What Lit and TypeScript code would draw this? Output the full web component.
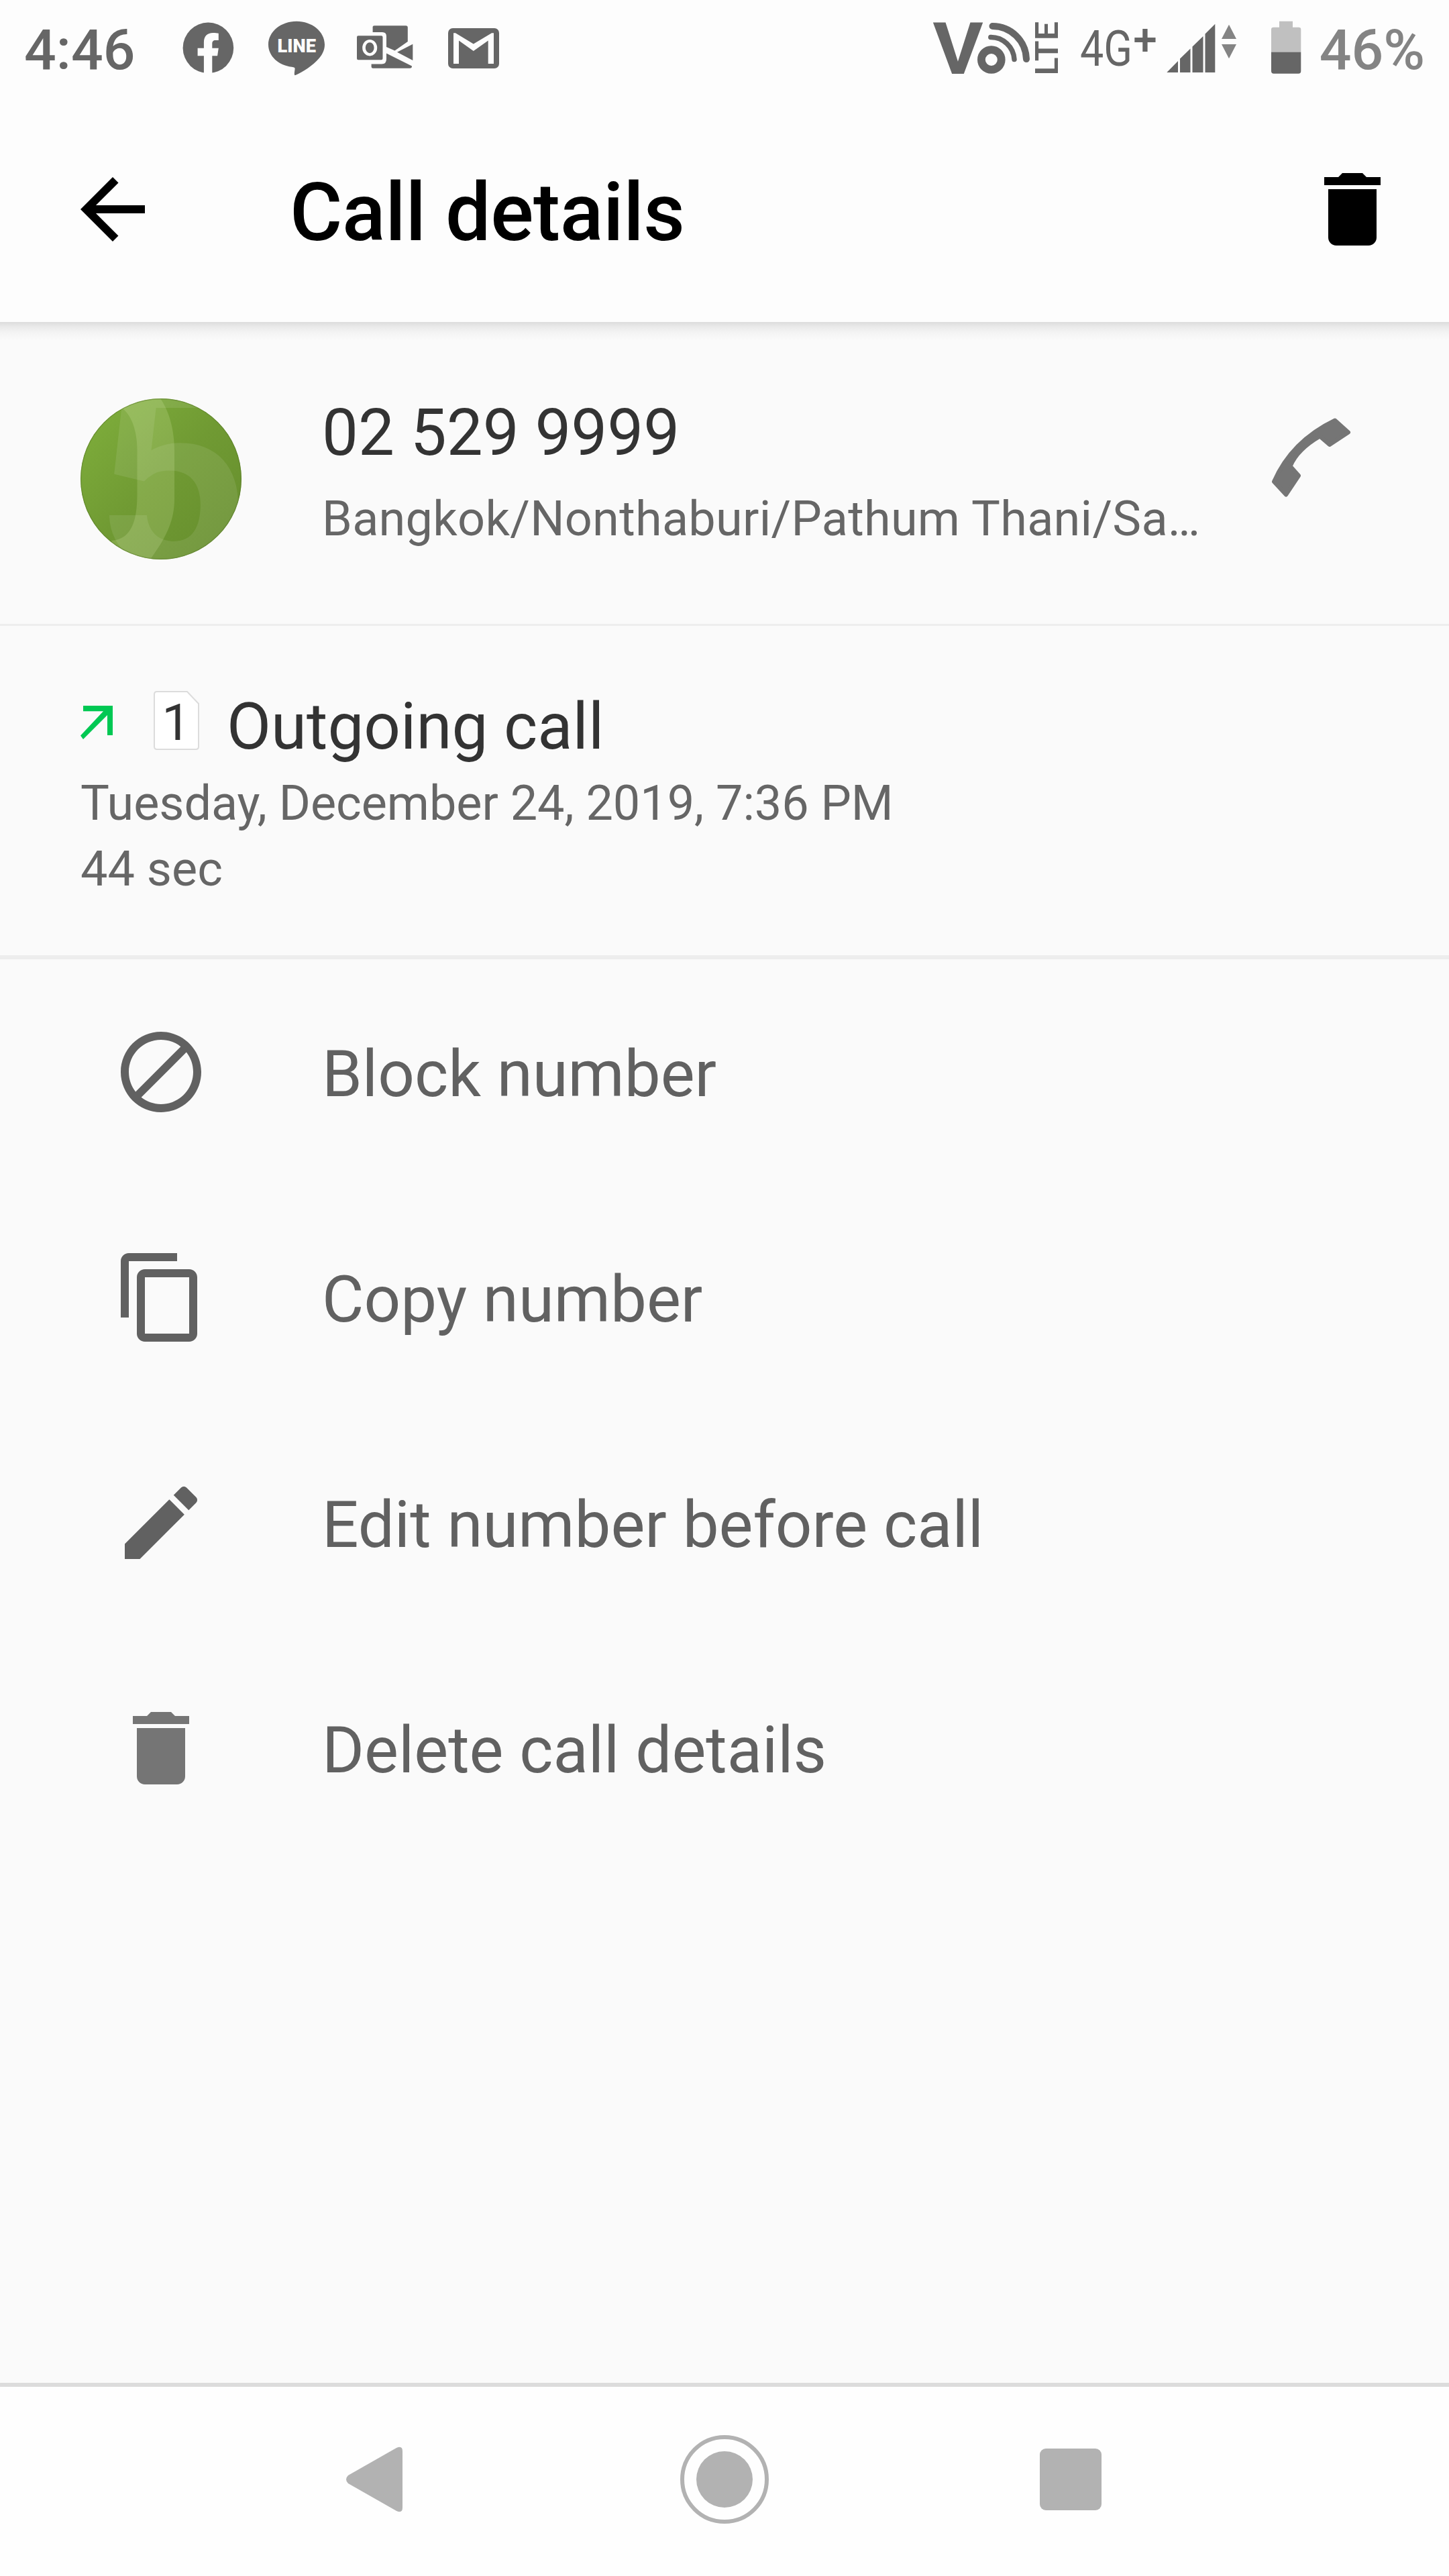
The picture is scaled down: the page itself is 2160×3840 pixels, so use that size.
import { LitElement, html, css, svg } from "lit";
import { customElement } from "lit/decorators.js";

const DELETE_PATH =
  "M6 19c0 1.1.9 2 2 2h8c1.1 0 2-.9 2-2V7H6v12zM19 4h-3.5l-1-1h-5l-1 1H5v2h14V4z";

const ACTIONS = [
  {
    label: "Block number",
    tone: "dark",
    path: "M12 2C6.48 2 2 6.48 2 12s4.48 10 10 10 10-4.48 10-10S17.52 2 12 2zM4 12c0-4.42 3.58-8 8-8 1.85 0 3.55.63 4.9 1.69L5.69 16.9C4.63 15.55 4 13.85 4 12zm8 8c-1.85 0-3.55-.63-4.9-1.69L18.31 7.1C19.37 8.45 20 10.15 20 12c0 4.42-3.58 8-8 8z",
  },
  {
    label: "Copy number",
    tone: "dark",
    path: "M16 1H4c-1.1 0-2 .9-2 2v14h2V3h12V1zm3 4H8c-1.1 0-2 .9-2 2v14c0 1.1.9 2 2 2h11c1.1 0 2-.9 2-2V7c0-1.1-.9-2-2-2zm0 16H8V7h11v14z",
  },
  {
    label: "Edit number before call",
    tone: "dark",
    path: "M3 17.25V21h3.75L17.81 9.94l-3.75-3.75L3 17.25zM20.71 7.04c.39-.39.39-1.02 0-1.41l-2.34-2.34c-.39-.39-1.02-.39-1.41 0l-1.83 1.83 3.75 3.75 1.83-1.83z",
  },
  { label: "Delete call details", tone: "mid", path: DELETE_PATH },
];

@customElement("status-bar")
export class StatusBar extends LitElement {
  static styles = css`
    :host {
      display: flex;
      align-items: flex-start;
      height: 144px;
      padding: 0 36px;
      box-sizing: border-box;
      color: #666;
    }
    svg {
      display: block;
      height: 144px;
      flex: none;
      fill: #666;
    }
    svg text {
      font-family: Roboto, sans-serif;
    }
    .time,
    .percent {
      font-size: 84px;
      line-height: 98px;
      font-weight: 500;
      padding-top: 26px;
      white-space: nowrap;
    }
    .percent {
      color: #848484;
    }
    .left,
    .right {
      display: flex;
      align-items: flex-start;
    }
    .left {
      flex: 1;
    }
    .time {
      width: 232px;
    }
    .cut {
      fill: #fdfdfd;
    }
    .arc {
      fill: none;
      stroke: #666;
    }
    .soft {
      fill: #848484;
    }
    .empty {
      fill: #c0c0c0;
    }
  `;

  render() {
    return html`
      <div class="left">
        <div class="time">4:46</div>
        <svg width="132" viewBox="268 0 132 144">
          <circle cx="310.4" cy="71.4" r="37.8" />
          <path
            class="cut"
            transform="translate(272.6 33.7)"
            d="M31.3 77V49.6H22V38H31.3V29.5C31.3 20 36.5 15.3 45 15.3C48.5 15.3 51 15.6 53.2 16V26.3H48.5C44.5 26.3 43.7 29 43.7 31.5V38H53.2L51.5 49.6H43.7V77Z"
          />
        </svg>
        <svg width="132" viewBox="400 0 132 144">
          <path
            d="M442 31.7C465 31.7 484 47 484 66.5C484 74 481 80.500 476 86.500C466 98 452 107 440.500 112C438 113 439 108 439.500 103.500C440 100.500 438.500 100.300 435 99.700C415 97.500 400 83.500 400 66.500C400 47 419 31.700 442 31.700Z"
          />
          <text class="cut" x="413.500" y="78" font-size="27" font-weight="900" textLength="57.500" lengthAdjust="spacingAndGlyphs">LINE</text>
        </svg>
        <svg width="136" viewBox="532 0 136 144">
          <g transform="translate(532 37)">
            <path fill-rule="evenodd" d="M2 16.300H36.500Q38.500 16.300 38.500 18.300V50.300Q38.500 52.300 36.500 52.300H2Q0 52.300 0 50.300V18.300Q0 16.300 2 16.300ZM19.200 22A11 12.200 0 1 0 19.200 46.400A11 12.200 0 1 0 19.200 22ZM19.200 26.200A6.400 8 0 1 1 19.200 42.200A6.400 8 0 1 1 19.200 26.200Z" />
            <path d="M23.600 11V3Q23.600 1.300 26 1.300H73Q75.800 1.300 75.800 4V25L56.500 38.500L44 33V17Q44 11 38 11Z" />
            <path d="M83.300 28.700L60 40.700L83.300 53Z" />
            <path d="M44 42.500L82 61.500Q82 64.800 79 64.800H24Q21.600 64.800 21.600 62.500V58.500H37Q44 58.500 44 51Z" />
          </g>
        </svg>
        <svg width="80" viewBox="668 0 80 144">
          <g transform="translate(668 42)">
            <rect width="76" height="60" rx="7" />
            <path class="cut" d="M8 53V7.300H11L37.800 23.500L65 7.300H68V53H59.700V18.500L37.800 34L16 18.500V53Z" />
          </g>
        </svg>
      </div>
      <div class="right">
        <svg width="218" viewBox="1388 0 218 144">
          <text x="1389.500" y="109.700" font-size="107" font-weight="700" textLength="75" lengthAdjust="spacingAndGlyphs">V</text>
          <circle class="arc" cx="1476.800" cy="89" r="14.900" stroke-width="11.800" />
          <path class="arc" stroke-width="10" stroke-linecap="round" d="M1478.500 39A50.500 50.500 0 0 1 1529 88" />
          <path class="arc" stroke-width="7.500" stroke-linecap="round" d="M1475.800 55.500A35 35 0 0 1 1511 88.500" />
          <text transform="translate(1576 112.500) rotate(-90)" font-size="48" font-weight="600" textLength="80.500" lengthAdjust="spacingAndGlyphs">LTE</text>
        </svg>
        <svg width="130" viewBox="1606 0 130 144">
          <text x="1609" y="97.500" font-size="75"><tspan textLength="78" lengthAdjust="spacingAndGlyphs">4G</tspan><tspan x="1688.300" y="80.800" font-size="64" font-weight="500">+</tspan></text>
        </svg>
        <svg width="156" viewBox="1736 0 156 144">
          <path d="M1738.300 108L1755 91V108ZM1758 87.500L1773.500 72.500V108H1758ZM1776.500 69.500L1792.500 54V108H1776.500ZM1795.500 50.500L1810.300 35.700V108H1795.500Z" />
          <path class="soft" d="M1831 36.700L1842 58H1820ZM1820 66H1842L1831 87.300Z" />
        </svg>
        <svg width="74" viewBox="1892 0 74 144">
          <path class="empty" d="M1906 31.700H1926V40.700H1935Q1938.300 40.700 1938.300 44V78H1894V44Q1894 40.700 1897.300 40.700H1906Z" />
          <path d="M1894 77.700H1938.300V106Q1938.300 109.700 1934.600 109.700H1897.700Q1894 109.700 1894 106Z" />
        </svg>
        <div class="percent">46%</div>
      </div>
    `;
  }
}

@customElement("contact-avatar")
export class ContactAvatar extends LitElement {
  static styles = css`
    :host {
      display: block;
      width: 240px;
      height: 240px;
      border-radius: 50%;
      overflow: hidden;
    }
    svg {
      display: block;
    }
    text {
      font-family: Roboto, sans-serif;
      font-weight: 700;
    }
  `;

  render() {
    return html`
      <svg width="240" height="240" viewBox="0 0 240 240">
        <defs>
          <linearGradient id="leaf" x1="0" y1="0" x2="1" y2="1">
            <stop offset="0" stop-color="#80b03c" />
            <stop offset="0.5" stop-color="#709a33" />
            <stop offset="1" stop-color="#658d2d" />
          </linearGradient>
        </defs>
        <rect width="240" height="240" fill="url(#leaf)" />
        <text x="22.500" y="253" font-size="400" fill="#fff" fill-opacity="0.09">5</text>
        <path
          fill="#f2ffc4"
          fill-opacity="0.16"
          d="M50 0L65 17C76 27 84.500 48 84.500 76V143C84.500 182 76 210 46 212L60 245H100C125 212 140 185 140 150V80C140 48 133 20 119 0Z"
        />
        <circle cx="120" cy="120" r="119.500" fill="none" stroke="#5c7d2c" stroke-opacity="0.6" stroke-width="1.500" />
      </svg>
    `;
  }
}

@customElement("app-root")
export class AppRoot extends LitElement {
  static styles = css`
    :host {
      display: flex;
      flex-direction: column;
      width: 2160px;
      height: 3840px;
      overflow: hidden;
      background: #fafafa;
      font-family: Roboto, sans-serif;
      color: #616161;
    }
    svg {
      display: block;
      flex: none;
    }
    .top {
      height: 480px;
      flex: none;
      background: #fdfdfd;
    }
    .toolbar {
      display: flex;
      align-items: flex-start;
      height: 240px;
      margin-top: 96px;
      padding: 0 72px 0 96px;
    }
    .title {
      flex: 1;
      margin: 7px 0 0 192px;
      color: #000;
      font-size: 120px;
      line-height: 140px;
      font-weight: 500;
      letter-spacing: -0.4px;
    }
    .shade {
      height: 27px;
      flex: none;
      background: linear-gradient(#dcdcdc, #e9e9e9 25%, #f3f3f3 55%, #fafafa);
    }
    .contact {
      display: flex;
      align-items: flex-start;
      height: 423px;
      flex: none;
      box-sizing: border-box;
      padding: 87px 144px 0 120px;
    }
    .who {
      flex: 1;
      margin: -5px 0 0 120px;
      white-space: nowrap;
    }
    .strong {
      color: #333;
      font-size: 96px;
      line-height: 112px;
    }
    .minor {
      color: #666;
      font-size: 72px;
      line-height: 84px;
      white-space: nowrap;
    }
    .place {
      margin-top: 31px;
      letter-spacing: 0.27px;
    }
    .handset {
      margin-top: 29px;
      fill: #757575;
      stroke: #757575;
    }
    .rule {
      flex: none;
      height: 3px;
      background: #ededed;
    }
    .rule-thick {
      height: 6px;
    }
    .entry {
      flex: none;
      height: 491px;
      box-sizing: border-box;
      padding: 94px 120px 0;
    }
    .kind {
      display: flex;
      align-items: flex-start;
      height: 112px;
    }
    .direction {
      margin-top: 25px;
    }
    .sim {
      margin: 2px 0 0 58px;
      overflow: visible;
    }
    .sim text {
      font-family: Roboto, sans-serif;
    }
    .kind-label {
      margin-left: 40px;
    }
    .when {
      margin-top: 17px;
      letter-spacing: -0.05px;
    }
    .length {
      margin-top: 14px;
    }
    .actions {
      flex: 1;
    }
    .action {
      display: flex;
      align-items: center;
      gap: 168px;
      height: 336px;
      padding-left: 168px;
      font-size: 96px;
      line-height: 112px;
    }
    .action-label {
      padding-top: 6px;
    }
    .dark {
      fill: #616161;
    }
    .mid {
      fill: #757575;
    }
    .nav {
      flex: none;
      display: flex;
      align-items: center;
      justify-content: center;
      gap: 404px;
      height: 288px;
      box-sizing: border-box;
      padding-bottom: 6px;
      border-top: 6px solid #dcdcdc;
      background: #fefefe;
      fill: #b2b2b2;
    }
    .back {
      margin-left: -2px;
    }
    .home {
      margin-left: 10px;
    }
  `;

  render() {
    return html`
      <header class="top">
        <status-bar></status-bar>
        <div class="toolbar">
          <svg width="144" height="144" viewBox="0 0 24 24">
            <path d="M20 11H7.830l5.590-5.590L12 4l-8 8 8 8 1.410-1.410L7.830 13H20v-2z" />
          </svg>
          <div class="title">Call details</div>
          <svg width="144" height="144" viewBox="0 0 24 24"><path d=${DELETE_PATH} /></svg>
        </div>
      </header>
      <div class="shade"></div>
      <section class="contact">
        <contact-avatar></contact-avatar>
        <div class="who">
          <div class="strong">02 529 9999</div>
          <div class="minor place">Bangkok/Nonthaburi/Pathum Thani/Sa…</div>
        </div>
        <svg class="handset" width="120" height="120" viewBox="0 0 120 120">
          <path
            stroke-width="6"
            stroke-linejoin="round"
            d="M94 3.500L114 21.500L86 40L71.500 27.500Q38 47 27.500 72L40 86L21 114.500L3 95Q29.500 34.500 94 3.500Z"
          />
        </svg>
      </section>
      <div class="rule"></div>
      <section class="entry">
        <div class="kind">
          <svg class="direction" width="50" height="50" viewBox="0 0 50 50">
            <path fill="#00c853" d="M4 0H48V44H40V14L4 50L0 44.500L34 8.300H4Z" />
          </svg>
          <svg class="sim" width="70" height="100" viewBox="0 0 70 100">
            <path
              fill="#fff"
              stroke="#dcdcdc"
              stroke-width="2"
              d="M6 2H51L68 20V84Q68 88 64 88H6Q2 88 2 84V6Q2 2 6 2Z"
            />
            <text x="34.500" y="74" font-size="76" text-anchor="middle" fill="#333">1</text>
          </svg>
          <div class="strong kind-label">Outgoing call</div>
        </div>
        <div class="minor when">Tuesday, December 24, 2019, 7:36 PM</div>
        <div class="minor length">44 sec</div>
      </section>
      <div class="rule rule-thick"></div>
      <section class="actions">
        ${ACTIONS.map(
          (a) => html`
            <div class="action">
              <svg class=${a.tone} width="144" height="144" viewBox="0 0 24 24">${svg`<path d=${a.path} />`}</svg>
              <div class="action-label">${a.label}</div>
            </div>
          `
        )}
      </section>
      <nav class="nav">
        <svg class="back" width="84" height="98" viewBox="0 0 84 98">
          <path d="M3 43L75 2Q84 -2 84 7V91Q84 100 75 96L3 55Q-3 49 3 43Z" />
        </svg>
        <svg class="home" width="132" height="132" viewBox="0 0 132 132">
          <circle cx="66" cy="66" r="63" fill="none" stroke="#b2b2b2" stroke-width="6" />
          <circle cx="66" cy="66" r="42" />
        </svg>
        <svg width="92" height="92" viewBox="0 0 92 92"><rect width="92" height="92" rx="9" /></svg>
      </nav>
    `;
  }
}
